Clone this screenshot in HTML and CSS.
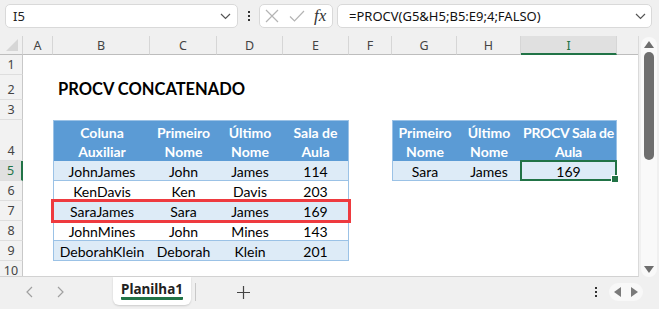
FILE: index.html
```html
<!DOCTYPE html>
<html lang="pt">
<head>
  <meta charset="UTF-8" />
  <meta name="viewport" content="width=device-width, initial-scale=1.0"/>
  <title>PROCV Concatenado</title>
  <link rel="stylesheet" href="styles.css">
</head>
<body>
  <div class="formula-bar">
    <div class="name-box">
      <span>I5</span>
      <svg class="chevron" width="11" height="7" viewBox="0 0 11 7"><path d="M1 1l4.5 4.5L10 1" fill="none" stroke="#555" stroke-width="1.2"/></svg>
    </div>
    <div class="bar-dots"><i></i><i></i><i></i></div>
    <div class="fx-box">
      <svg width="14" height="14" viewBox="0 0 14 14"><path d="M1 1l12 12M13 1L1 13" stroke="#b4b4b4" stroke-width="1.2"/></svg>
      <svg width="16" height="12" viewBox="0 0 16 12"><path d="M1 6.5l4.5 4.5L15 1" fill="none" stroke="#b4b4b4" stroke-width="1.2"/></svg>
      <span class="fx">fx</span>
    </div>
    <div class="formula-input">
      <span>=PROCV(G5&amp;H5;B5:E9;4;FALSO)</span>
      <svg class="chevron" width="11" height="7" viewBox="0 0 11 7"><path d="M1 1l4.5 4.5L10 1" fill="none" stroke="#555" stroke-width="1.2"/></svg>
    </div>
  </div>

  <div class="workspace">
    <div class="sheet">
      <div class="corner"><svg width="12" height="12" viewBox="0 0 12 12"><path d="M12 0V12H0z" fill="#d6d6d6"/></svg></div>
      <div class="col-head">A</div>
      <div class="col-head">B</div>
      <div class="col-head">C</div>
      <div class="col-head">D</div>
      <div class="col-head">E</div>
      <div class="col-head">F</div>
      <div class="col-head">G</div>
      <div class="col-head">H</div>
      <div class="col-head active">I</div>
      <div class="col-head last"></div>

      <div class="row-head">1</div>
      <div class="row-head">2</div>
      <div class="row-head">3</div>
      <div class="row-head">4</div>
      <div class="row-head active">5</div>
      <div class="row-head">6</div>
      <div class="row-head">7</div>
      <div class="row-head">8</div>
      <div class="row-head">9</div>
      <div class="row-head">10</div>

      <div class="title">PROCV CONCATENADO</div>

      <div class="table t1">
        <div class="trow thead">
          <div>Coluna<br>Auxiliar</div>
          <div>Primeiro<br>Nome</div>
          <div>Último<br>Nome</div>
          <div>Sala de<br>Aula</div>
        </div>
        <div class="trow band">
          <div>JohnJames</div><div>John</div><div>James</div><div>114</div>
        </div>
        <div class="trow">
          <div>KenDavis</div><div>Ken</div><div>Davis</div><div>203</div>
        </div>
        <div class="trow band marked">
          <div>SaraJames</div><div>Sara</div><div>James</div><div>169</div>
        </div>
        <div class="trow">
          <div>JohnMines</div><div>John</div><div>Mines</div><div>143</div>
        </div>
        <div class="trow band">
          <div>DeborahKlein</div><div>Deborah</div><div>Klein</div><div>201</div>
        </div>
      </div>

      <div class="table t2">
        <div class="trow thead">
          <div>Primeiro<br>Nome</div>
          <div>Último<br>Nome</div>
          <div class="tight">PROCV Sala de<br>Aula</div>
        </div>
        <div class="trow band">
          <div>Sara</div><div>James</div><div class="selected">169</div>
        </div>
      </div>
    </div>

    <div class="vscroll">
      <div class="track">
        <svg width="10" height="7" viewBox="0 0 10 7"><path d="M5 0l5 7H0z" fill="#6e6e6e"/></svg>
        <div class="thumb"></div>
        <div class="spacer"></div>
        <svg width="10" height="7" viewBox="0 0 10 7"><path d="M0 0h10L5 7z" fill="#6e6e6e"/></svg>
      </div>
    </div>
  </div>

  <div class="tab-bar">
    <div class="tab-nav">
      <svg width="8" height="12" viewBox="0 0 8 12"><path d="M7 1L2 6l5 5" fill="none" stroke="#a0a0a0" stroke-width="1.2"/></svg>
      <svg width="8" height="12" viewBox="0 0 8 12"><path d="M1 1l5 5-5 5" fill="none" stroke="#a0a0a0" stroke-width="1.2"/></svg>
    </div>
    <div class="tab"><span>Planilha1</span></div>
    <div class="tab-sep"></div>
    <div class="tab-add">
      <svg width="13" height="13" viewBox="0 0 13 13"><path d="M6.5 0v13M0 6.5h13" stroke="#444" stroke-width="1.2"/></svg>
    </div>
    <div class="tab-right">
      <div class="bar-dots"><i></i><i></i><i></i></div>
      <div class="hscroll-btns">
        <svg width="7" height="10" viewBox="0 0 7 10"><path d="M7 0v10L0 5z" fill="#7a7a7a"/></svg>
        <svg width="7" height="10" viewBox="0 0 7 10"><path d="M0 0l7 5-7 5z" fill="#7a7a7a"/></svg>
      </div>
    </div>
  </div>
</body>
</html>
```

FILE: styles.css
```css
* {
  box-sizing: border-box;
}

body {
  margin: 0;
  width: 659px;
  height: 309px;
  overflow: hidden;
  background: #f0f0f0;
  font-family: "Noto Sans", sans-serif;
  display: flex;
  flex-direction: column;
}

/* formula bar */
.formula-bar {
  height: 36px;
  flex: none;
  display: flex;
  align-items: flex-start;
  padding: 4px 0 0 5px;
}

.name-box,
.fx-box,
.formula-input {
  height: 24px;
  background: #fff;
  border: 1px solid #d9d9d9;
  border-radius: 5px;
  display: flex;
  align-items: center;
}

.name-box {
  width: 233px;
  padding: 0 6px 0 7px;
  justify-content: space-between;
  font-size: 13px;
  color: #222;
}

.bar-dots {
  width: 21px;
  height: 24px;
  display: flex;
  flex-direction: column;
  align-items: center;
  justify-content: center;
  gap: 2px;
}

.bar-dots i {
  width: 2px;
  height: 2px;
  background: #333;
}

.fx-box {
  width: 74px;
  padding: 0 5px 0 5px;
  gap: 10px;
}

.fx {
  font-family: "Liberation Serif", serif;
  font-style: italic;
  font-size: 17px;
  color: #333;
  margin-left: -1px;
}

.formula-input {
  width: 315px;
  margin-left: 4px;
  padding: 0 5px 0 11px;
  justify-content: space-between;
  font-size: 13px;
  color: #111;
}

/* sheet */
.workspace {
  flex: 1;
  display: flex;
  min-height: 0;
}

.sheet {
  width: 639px;
  background: #fff;
  display: grid;
  grid-template-columns: 23px 30px 97px 67px 66px 66px 43px 65px 64px 96px 1fr;
  grid-template-rows: 19px 20px 25px 20px 41px repeat(6, 20px);
  overflow: hidden;
  border-right: 1px solid #dadada;
  border-bottom: 1px solid #d2d2d2;
}

.corner {
  background: #f0f0f0;
  border-bottom: 1px solid #bdbdbd;
  border-right: 1px solid #d4d4d4;
  display: flex;
  align-items: flex-end;
  justify-content: flex-end;
  padding: 0 4px 3px 0;
}

.col-head {
  background: #f0f0f0;
  border-bottom: 1px solid #bdbdbd;
  border-right: 1px solid #d6d6d6;
  font-size: 12.5px;
  color: #444;
  text-align: center;
  line-height: 19px;
}

.col-head.active {
  background: #e0e0e0;
  border-bottom: 2px solid #217346;
  color: #217346;
}

.col-head.last {
  border-right: none;
}

.row-head {
  grid-column: 1;
  background: #f2f2f2;
  border-right: 1px solid #c8c8c8;
  border-bottom: 1px solid #dedede;
  font-size: 12.5px;
  color: #444;
  display: flex;
  align-items: flex-end;
  justify-content: center;
  padding-bottom: 1px;
}

.row-head.active {
  background: #e0e0e0;
  border-right: 2px solid #217346;
  color: #217346;
}

.title {
  grid-column: 3 / 7;
  grid-row: 3;
  align-self: center;
  padding: 2px 0 0 5px;
  font-family: Lato, sans-serif;
  font-weight: 700;
  font-size: 16.5px;
  color: #000;
}

/* tables */
.table {
  font-family: Lato, sans-serif;
  font-size: 14px;
  color: #000;
  border-left: 1px solid #9bc2e6;
  border-right: 1px solid #9bc2e6;
  display: flex;
  flex-direction: column;
}

.t1 {
  grid-column: 3 / 7;
  grid-row: 5 / 11;
}

.t2 {
  grid-column: 8 / 11;
  grid-row: 5 / 7;
}

.trow {
  display: grid;
  height: 20px;
  border-bottom: 1px solid #9bc2e6;
}

.t1 .trow {
  grid-template-columns: 96px 67px 66px 1fr;
}

.t2 .trow {
  grid-template-columns: 64px 64px 1fr;
}

.trow > div {
  display: flex;
  align-items: center;
  justify-content: center;
  text-align: center;
  white-space: nowrap;
  padding-top: 1px;
}

.trow.thead {
  height: 41px;
  background: #5b9bd5;
  color: #fff;
  font-weight: 700;
  line-height: 19px;
  border-top: 1px solid #9bc2e6;
  border-bottom: none;
}

.trow.thead .tight {
  letter-spacing: -0.3px;
}

.trow.band {
  background: #ddebf7;
}

.trow.marked {
  position: relative;
  z-index: 1;
  outline: 3px solid #ee3a3f;
  outline-offset: -1px;
  margin: 0 -1px;
  padding: 0 1px;
}

.selected {
  position: relative;
}

.selected::after {
  content: "";
  position: absolute;
  inset: -1px -1px -1px -1px;
  border: 2px solid #217346;
}

.selected::before {
  content: "";
  position: absolute;
  right: -3px;
  bottom: -3px;
  width: 6px;
  height: 6px;
  background: #217346;
  border: 1px solid #fff;
  z-index: 2;
}

/* vertical scrollbar */
.vscroll {
  width: 20px;
  background: #f0f0f0;
  padding: 1px 2px 0 2px;
}

.track {
  height: 100%;
  background: #f9f9f9;
  border-radius: 8px;
  display: flex;
  flex-direction: column;
  align-items: center;
  padding: 4px 0 4px;
}

.thumb {
  width: 10px;
  height: 108px;
  margin-top: 4px;
  background: #6e6e6e;
  border-radius: 5px;
}

.spacer {
  flex: 1;
}

/* sheet tabs */
.tab-bar {
  height: 32px;
  flex: none;
  display: flex;
  align-items: flex-start;
}

.tab-nav {
  width: 113px;
  height: 30px;
  display: flex;
  align-items: center;
  padding-left: 25px;
  gap: 24px;
}

.tab {
  width: 78px;
  height: 28px;
  background: #fff;
  border-radius: 0 0 6px 6px;
  box-shadow: 0 1px 2px rgba(0, 0, 0, 0.15);
  display: flex;
  justify-content: center;
  padding-top: 4px;
}

.tab span {
  font-size: 13.5px;
  font-weight: 700;
  color: #222;
  height: 19px;
  border-bottom: 3px solid #217346;
  border-radius: 1px;
  line-height: 16px;
}

.tab-sep {
  width: 1px;
  height: 18px;
  background: #c8c8c8;
  margin: 6px 0 0 4px;
}

.tab-add {
  width: 95px;
  height: 30px;
  display: flex;
  align-items: center;
  justify-content: center;
}

.tab-right {
  margin-left: auto;
  display: flex;
  align-items: center;
  height: 30px;
  padding-right: 16px;
  gap: 3px;
}

.tab-right .bar-dots {
  height: 30px;
}

.hscroll-btns {
  width: 34px;
  height: 18px;
  background: #f8f8f8;
  border-radius: 9px;
  display: flex;
  align-items: center;
  justify-content: center;
  gap: 10px;
}
```
